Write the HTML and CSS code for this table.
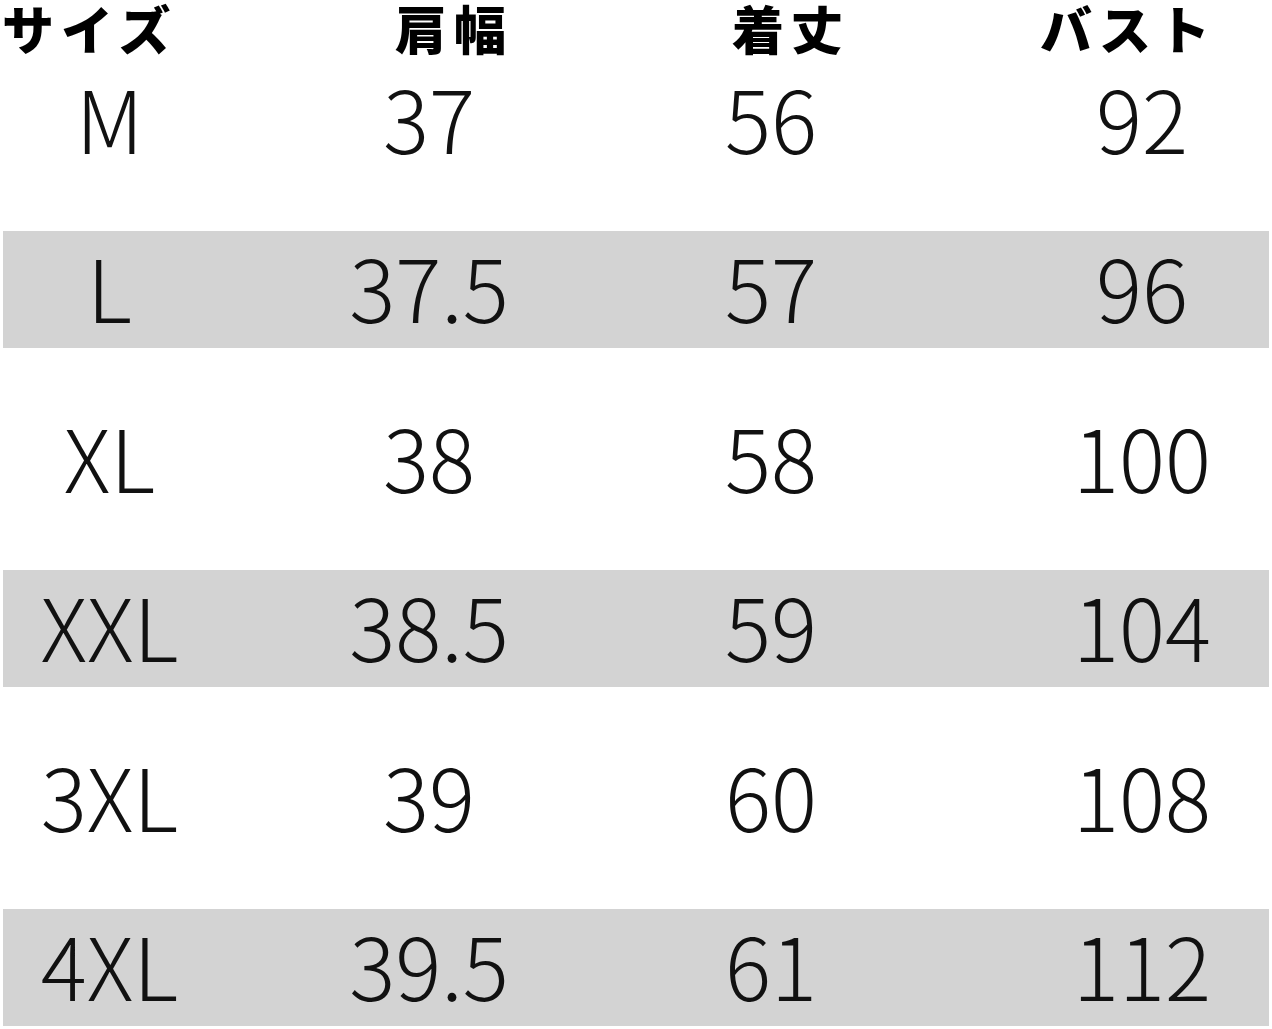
FILE: index.html
```html
<!DOCTYPE html>
<html lang="ja">
<head>
<meta charset="utf-8">
<link rel="stylesheet" href="styles.css">
</head>
<body>
<div class="chart">
  <div class="head">
    <div class="h">サイズ</div>
    <div class="h">肩幅</div>
    <div class="h">着丈</div>
    <div class="h">バスト</div>
  </div>
  <div class="rows">
    <div class="row"><div class="c c1">M</div><div class="c c2">37</div><div class="c c3">56</div><div class="c c4">92</div></div>
    <div class="row band"><div class="c c1">L</div><div class="c c2">37.5</div><div class="c c3">57</div><div class="c c4">96</div></div>
    <div class="row"><div class="c c1">XL</div><div class="c c2">38</div><div class="c c3">58</div><div class="c c4">100</div></div>
    <div class="row band"><div class="c c1">XXL</div><div class="c c2">38.5</div><div class="c c3">59</div><div class="c c4">104</div></div>
    <div class="row"><div class="c c1">3XL</div><div class="c c2">39</div><div class="c c3">60</div><div class="c c4">108</div></div>
    <div class="row band"><div class="c c1">4XL</div><div class="c c2">39.5</div><div class="c c3">61</div><div class="c c4">112</div></div>
  </div>
</div>
</body>
</html>
```
FILE: styles.css
```css
html, body {
  margin: 0;
  padding: 0;
  background: #ffffff;
}
body {
  width: 1272px;
  height: 1029px;
  overflow: hidden;
}
.chart {
  width: 1272px;
}
.head {
  display: grid;
  grid-template-columns: 393px 337px 308px 1fr;
  height: 61.5px;
  padding-left: 2px;
  box-sizing: border-box;
}
.h {
  font-family: "Noto Sans CJK JP", sans-serif;
  font-weight: 900;
  font-size: 52px;
  letter-spacing: 7px;
  line-height: 56px;
  color: #000;
  white-space: nowrap;
}
.rows {
  display: flex;
  flex-direction: column;
  gap: 52.5px;
}
.row {
  display: grid;
  grid-template-columns: 216px 420px 264px 1fr;
  height: 117px;
  margin: 0 3px;
  font-family: "Noto Sans CJK JP", sans-serif;
  font-weight: 300;
  font-size: 86px;
  line-height: 110px;
  color: #111;
}
.band {
  background: #d3d3d3;
}
.c {
  text-align: center;
  white-space: nowrap;
}
.c1 { padding-right: 3px; }
.c4 { padding-left: 112px; }
```
